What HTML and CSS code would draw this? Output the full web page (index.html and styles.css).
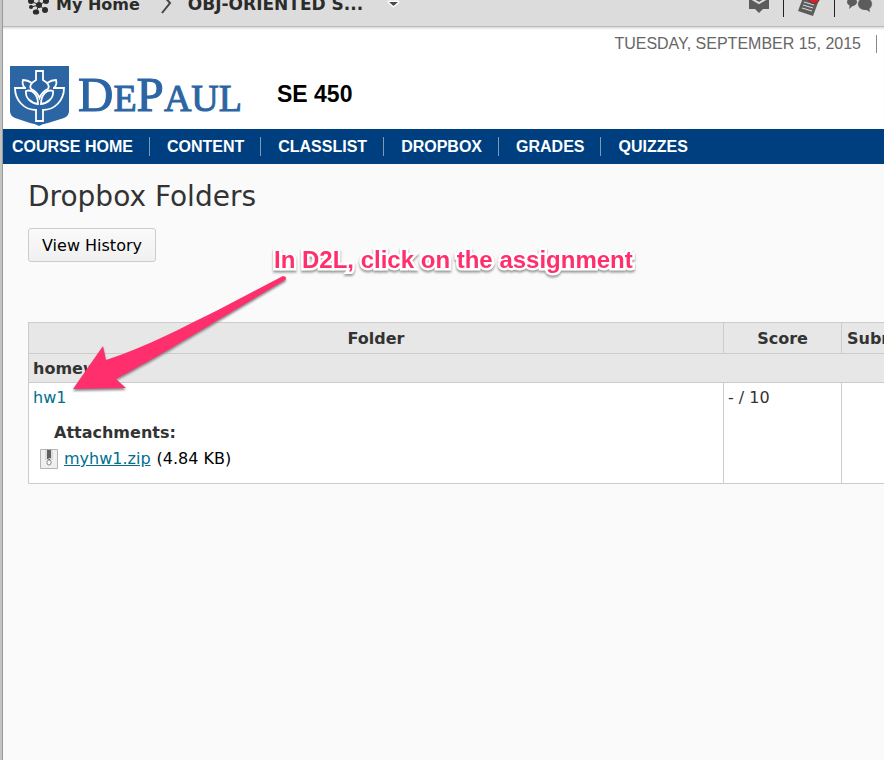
FILE: index.html
```html
<!DOCTYPE html>
<html lang="en">

<head>
    <meta charset="UTF-8">
    <meta name="viewport" content="width=device-width, initial-scale=1.0">
    <title>Dropbox Folders - SE 450</title>

    <link rel="stylesheet" href="styles.css">
</head>

<body>
    <div class="edge"></div>
    <div class="page">
        <div class="topbar">
            <div class="topbar-row">
                <a class="top-link" href="#">
                    <svg class="icon-home" viewBox="0 0 24 24" width="24" height="24" aria-hidden="true">
                        <path d="M12 13L4 9M12 13L19 9M12 13L4 15M12 13L9 20M12 13L18 18M12 13V3" stroke="#2b2b2b" stroke-width="1" />
                        <g fill="#2b2b2b">
                            <circle cx="12" cy="13" r="3" />
                            <circle cx="4" cy="9" r="3" />
                            <circle cx="19" cy="9" r="3" />
                            <circle cx="13" cy="3" r="3" />
                            <circle cx="4" cy="15" r="2" />
                            <ellipse cx="9" cy="20" rx="3.2" ry="2.6" />
                            <circle cx="18" cy="18" r="3" />
                        </g>
                    </svg>
                    My Home
                </a>
                <svg class="icon-chevron" viewBox="0 0 12 24" width="12" height="24" aria-hidden="true">
                    <path d="M2 2L10 11L2 21" fill="none" stroke="#444" stroke-width="2" />
                </svg>
                <button class="course" type="button">
                    OBJ-ORIENTED S...
                    <svg viewBox="0 0 14 10" width="14" height="10" aria-hidden="true">
                        <path d="M3 3H12L7.5 7Z" fill="#4a4a4a" stroke="#fff" stroke-width="3" stroke-linejoin="round" paint-order="stroke" />
                    </svg>
                </button>

                <div class="alerts">
                    <button type="button" aria-label="Messages">
                        <svg viewBox="0 0 24 24" width="24" height="24">
                            <path d="M3 3H23V17H17L13 21L9 17H3Z" fill="#5c5c5c" />
                            <path d="M6 7L13 11L20 7" fill="none" stroke="#dcdcdc" stroke-width="2" />
                        </svg>
                    </button>
                    <button type="button" aria-label="Updates">
                        <svg viewBox="0 0 24 24" width="24" height="24">
                            <path d="M7 3L22 8L16 24L1 19Z" fill="#5c5c5c" />
                            <path d="M7 10L17 13M6 13L16 16M5 16L15 19" stroke="#dcdcdc" stroke-width="1" />
                            <circle cx="17" cy="6" r="5.5" fill="#e01f2b" stroke="#444" />
                        </svg>
                    </button>
                    <button type="button" aria-label="Discussions">
                        <svg viewBox="0 0 28 24" width="28" height="24">
                            <ellipse cx="6" cy="10" rx="5" ry="4" fill="#5c5c5c" />
                            <path d="M4 12L3 17L8 13Z" fill="#5c5c5c" />
                            <ellipse cx="19" cy="12" rx="7.5" ry="6.5" fill="#5c5c5c" stroke="#dcdcdc" />
                            <path d="M19 17L24 20L23 15Z" fill="#5c5c5c" />
                        </svg>
                    </button>
                </div>
            </div>
        </div>

        <header>
            <div class="date"><span>TUESDAY, SEPTEMBER 15, 2015</span></div>
            <div class="brand">
                <svg viewBox="0 0 59 60" width="59" height="60" aria-hidden="true">
                    <path d="M0 0H59V45Q59 50 54 52L38 57Q32 58 29 60Q26 58 20 57L5 52Q0 50 0 45Z" fill="#2c65a3" />
                    <g fill="none" stroke="#fff" stroke-width="1.8">
                        <path d="M26 14V5H33V14C38 17 40 20 38 23C33 25 31 28 29.5 32C28 28 26 25 21 23C19 20 21 17 26 14Z" />
                        <path d="M22 17C19 15 16 14 13 14C12 17 13 20 15 22M37 17C40 15 43 14 46 14C47 17 46 20 44 22" />
                        <path d="M16 25C22 23 28 28 28 38C21 37 15 32 16 25Z" />
                        <path d="M43 25C37 23 31 28 31 38C38 37 44 32 43 25Z" />
                        <path d="M16 22H5C5 34 14 44 26 44V55H33V44C45 44 54 34 54 22H43" />
                    </g>
                </svg>
                <span class="wordmark">D<small>E</small>P<small>AUL</small></span>
                <span class="course-code">SE 450</span>
            </div>
        </header>

        <nav>
            <a href="#">COURSE HOME</a>
            <a href="#">CONTENT</a>
            <a href="#">CLASSLIST</a>
            <a href="#">DROPBOX</a>
            <a href="#">GRADES</a>
            <a href="#">QUIZZES</a>
        </nav>

        <main>
            <h1>Dropbox Folders</h1>
            <button class="history" type="button">View History</button>

            <table>
                <thead>
                    <tr>
                        <th>Folder</th>
                        <th class="score">Score</th>
                        <th class="submissions">Submissions</th>
                    </tr>
                </thead>
                <tbody>
                    <tr class="group">
                        <th colspan="3">homework</th>
                    </tr>
                    <tr class="folder">
                        <td>
                            <a class="assignment" href="#">hw1</a>
                            <div class="attachments">Attachments:</div>
                            <div class="file">
                                <svg viewBox="0 0 18 20" width="18" height="20" aria-hidden="true">
                                    <rect x="0" y="0" width="18" height="20" rx="1" fill="#b5b5b5" />
                                    <rect x="1" y="1" width="16" height="18" fill="#efefef" />
                                    <path d="M5 1H13V11H5Z" fill="#dadada" />
                                    <path d="M7 1L11 3L7 5L11 7L7 9L10 11M11 1L7 3L11 5L7 7L11 9" fill="none" stroke="#444" stroke-width="1" />
                                    <rect x="7" y="11" width="4" height="5" rx="2" fill="#fff" stroke="#888" />
                                </svg>
                                <a href="#">myhw1.zip</a>
                                <span>(4.84 KB)</span>
                            </div>
                        </td>
                        <td>- / 10</td>
                        <td></td>
                    </tr>
                </tbody>
            </table>

            <div class="callout">In D2L, click on the assignment</div>
            <svg class="arrow" viewBox="0 0 224 124" width="224" height="124" aria-hidden="true">
                <path d="M4 117L34 74L37 88C80 74 116 54 149 38L214 4Q219 5 216 8L164 39C124 63 92 83 47 107L57 116Z" fill="#ff2f6d" />
            </svg>
        </main>
    </div>
</body>

</html>
```
FILE: styles.css
```css
body {
    margin: 0;
    display: flex;
    min-height: 100vh;
    font-family: Verdana, "DejaVu Sans", sans-serif;
    font-size: 16px;
    color: #333;
    background-color: #fafafa;
}

button {
    font-family: inherit;
    font-size: inherit;
}

.edge {
    flex: none;
    width: 2px;
    background-color: #c4c4c4;
    border-right: 1px solid #999;
}

.page {
    flex: 1;
    min-width: 0;
    overflow: hidden;
}

/* top bar, scrolled halfway out of view */
.topbar {
    display: flex;
    align-items: flex-end;
    height: 26px;
    overflow: hidden;
    background-color: #dcdcdc;
    border-bottom: 1px solid #bbb;
}

.topbar-row {
    flex: 1;
    display: flex;
    align-items: center;
    height: 44px;
    padding: 0 10px 0 24px;
    font-size: 16px;
    font-weight: bold;
}

.top-link {
    display: flex;
    align-items: center;
    gap: 5px;
    color: #2b2b2b;
    text-decoration: none;
}

.icon-chevron {
    margin: 0 16px 0 20px;
}

.course {
    display: flex;
    align-items: center;
    gap: 23px;
    padding: 0;
    font-size: 17px;
    font-weight: bold;
    color: #2b2b2b;
    background: none;
    border: none;
}

.alerts {
    display: flex;
    margin-left: auto;
}

.alerts button {
    display: flex;
    padding: 1px 13px;
    background: none;
    border: none;
    border-right: 1px solid #222;
}

.alerts button:last-child {
    padding-left: 11px;
    padding-right: 0;
    border: none;
}

header {
    padding: 8px 7px 3px;
    font-family: Arial, "Liberation Sans", sans-serif;
    background-color: #fff;
    box-shadow: inset 0 3px 3px -2px #ccc;
}

.date {
    display: flex;
    justify-content: flex-end;
    font-size: 16px;
    line-height: 18px;
    color: #666;
}

.date span {
    padding-right: 15px;
    border-right: 1px solid #888;
}

.brand {
    display: flex;
    align-items: center;
    height: 60px;
    margin-top: 13px;
}

.wordmark {
    margin: 0 35px 0 9px;
    font-family: "Liberation Serif", serif;
    font-size: 49px;
    line-height: 56px;
    color: #2c65a3;
    -webkit-text-stroke: 1px #2c65a3;
}

.wordmark small {
    font-size: 38px;
}

.course-code {
    padding-bottom: 4px;
    font-size: 23px;
    font-weight: bold;
    color: #000;
}

nav {
    display: flex;
    padding: 8px 0;
    background-color: #003f7f;
}

nav a {
    padding: 0 16px 0 17px;
    font-family: Arial, "Liberation Sans", sans-serif;
    font-size: 16px;
    font-weight: bold;
    line-height: 19px;
    color: #fff;
    text-decoration: none;
    border-right: 1px solid #8299b3;
}

nav a:first-child {
    padding-left: 9px;
}

nav a:last-child {
    border: none;
}

main {
    position: relative;
    padding: 15px 0 0 25px;
}

h1 {
    margin: 0;
    font-size: 28px;
    font-weight: normal;
    line-height: 36px;
}

.history {
    height: 34px;
    margin: 13px 0 60px;
    padding: 0 13px;
    color: #000;
    background: linear-gradient(#fafafa, #f0f0f0);
    border: 1px solid #ccc;
    border-radius: 3px;
}

/* the last column runs past the right edge of the window */
table {
    width: calc(100% + 81px);
    table-layout: fixed;
    border-collapse: collapse;
    background-color: #fff;
}

th,
td {
    padding: 5px 4px 3px;
    line-height: 20px;
    text-align: left;
    vertical-align: top;
    border: 1px solid #ccc;
}

th {
    background-color: #e7e7e7;
}

thead th {
    padding: 6px 5px 4px;
    text-align: center;
}

.score {
    width: 107px;
}

.submissions {
    width: 112px;
    text-align: left;
    white-space: nowrap;
}

.folder td {
    height: 92px;
}

a {
    color: #006f8f;
}

.assignment {
    text-decoration: none;
}

.attachments {
    margin: 15px 0 6px 21px;
    font-weight: bold;
}

.file {
    display: flex;
    align-items: center;
    gap: 6px;
    margin-left: 7px;
    color: #000;
}

.callout {
    position: absolute;
    top: 81px;
    left: 271px;
    font-family: Helvetica, "Liberation Sans", sans-serif;
    font-size: 24px;
    font-weight: bold;
    line-height: 30px;
    color: #ff2f6d;
    -webkit-text-stroke: 5px #fff;
    paint-order: stroke fill;
    filter: drop-shadow(0 2px 1px #999);
}

.arrow {
    position: absolute;
    top: 108px;
    left: 66px;
    filter: drop-shadow(0 2px 1px #888);
}
```
